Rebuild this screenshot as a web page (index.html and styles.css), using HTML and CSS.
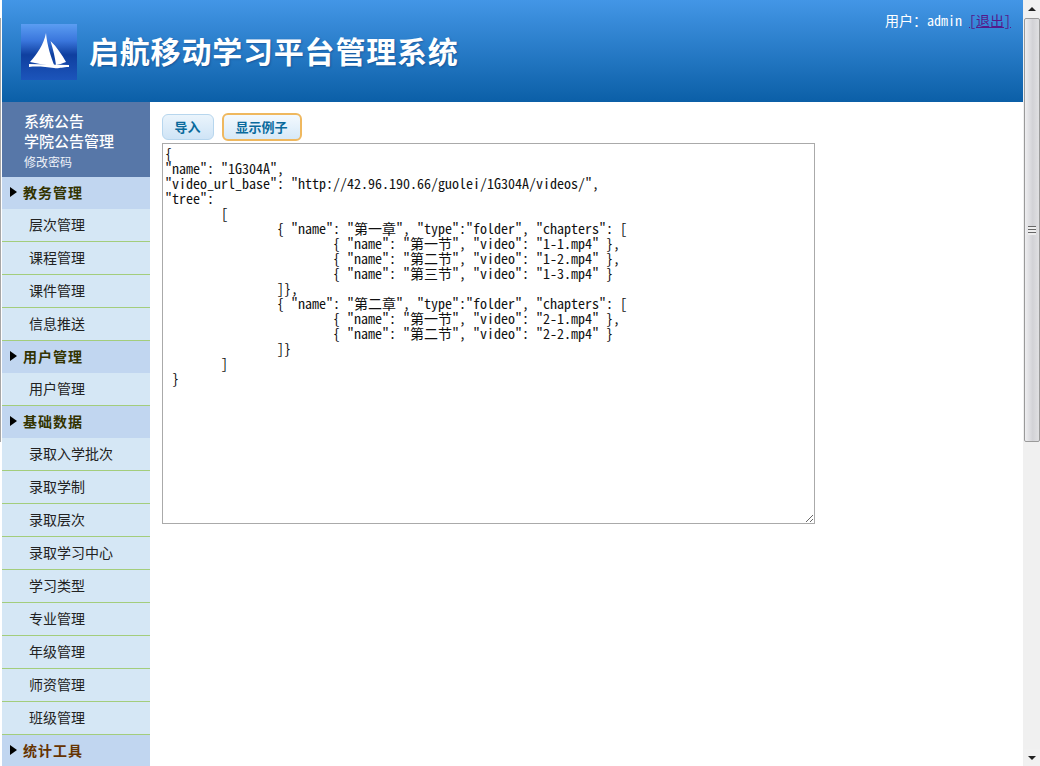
FILE: index.html
```html
<!DOCTYPE html>
<html lang="zh-CN">
<head>
<meta charset="utf-8">
<title>启航移动学习平台管理系统</title>
<link rel="stylesheet" href="styles.css">
</head>
<body>
<div class="page">
  <div class="gutter"></div>
  <div class="main">
    <header class="header">
      <div class="brand">
        <svg class="logo" viewBox="0 0 56 56" width="56" height="56" aria-hidden="true">
          <defs>
            <linearGradient id="logoBg" x1="0" y1="0" x2="0" y2="1">
              <stop offset="0" stop-color="#5b9df2"/>
              <stop offset="0.3" stop-color="#3a76dc"/>
              <stop offset="0.55" stop-color="#0f3f9f"/>
              <stop offset="1" stop-color="#1c55bb"/>
            </linearGradient>
          </defs>
          <rect width="56" height="56" fill="url(#logoBg)"/>
          <path d="M25 9 C26 21 30 33 33.5 42 C26 41 17 40 9 38 C16 30 23 20 25 9Z" fill="#fff"/>
          <path d="M29.5 17 C36 23 41 31 45 38 C41 39.5 38 40.5 35 41 C34 33 32 25 29.5 17Z" fill="#fff"/>
          <path d="M8 40 L48 41 L48 43 C40 43 38 45 33 44 C25 43 16 42 8 43Z" fill="#fff"/>
        </svg>
        <h1 class="title">启航移动学习平台管理系统</h1>
      </div>
      <div class="user">用户：admin <a class="logout" href="#">[退出]</a></div>
    </header>
    <div class="body">
      <nav class="sidebar">
        <div class="quick">
          <a class="quick-main">系统公告</a>
          <a class="quick-main">学院公告管理</a>
          <a class="quick-sub">修改密码</a>
        </div>
        <div class="group">教务管理</div>
        <a class="item">层次管理</a>
        <a class="item">课程管理</a>
        <a class="item">课件管理</a>
        <a class="item">信息推送</a>
        <div class="group">用户管理</div>
        <a class="item">用户管理</a>
        <div class="group">基础数据</div>
        <a class="item">录取入学批次</a>
        <a class="item">录取学制</a>
        <a class="item">录取层次</a>
        <a class="item">录取学习中心</a>
        <a class="item">学习类型</a>
        <a class="item">专业管理</a>
        <a class="item">年级管理</a>
        <a class="item">师资管理</a>
        <a class="item">班级管理</a>
        <div class="group group-tools">统计工具</div>
      </nav>
      <main class="content">
        <div class="toolbar">
          <button class="btn" type="button">导入</button>
          <button class="btn btn-focus" type="button">显示例子</button>
        </div>
        <textarea class="json" spellcheck="false">{
"name": "1G304A",
"video_url_base": "http://42.96.190.66/guolei/1G304A/videos/",
"tree":
	[
		{ "name": "第一章", "type":"folder", "chapters": [
			{ "name": "第一节", "video": "1-1.mp4" },
			{ "name": "第二节", "video": "1-2.mp4" },
			{ "name": "第三节", "video": "1-3.mp4" }
		]},
		{ "name": "第二章", "type":"folder", "chapters": [
			{ "name": "第一节", "video": "2-1.mp4" },
			{ "name": "第二节", "video": "2-2.mp4" }
		]}
	]
 }</textarea>
      </main>
    </div>
  </div>
  <div class="scrollbar" aria-hidden="true">
    <div class="sb-btn"><span class="arrow-up"></span></div>
    <div class="sb-thumb"><span class="sb-grip"></span></div>
    <div class="sb-track"></div>
    <div class="sb-btn"><span class="arrow-down"></span></div>
  </div>
</div>
</body>
</html>
```
FILE: styles.css
```css
* { box-sizing: border-box; }
html, body { margin: 0; height: 100%; overflow: hidden; background: #fff; }
body { font-family: "Noto Sans CJK SC", "Liberation Sans", sans-serif; }

.page { display: flex; height: 766px; width: 1040px; overflow: hidden; }
.gutter { flex: 0 0 2px; padding-top: 18px; background: #fff; }
.gutter::before { content: ""; display: block; width: 1px; height: 424px; background: #a6a6a6; }
.main { flex: 0 0 1021px; min-width: 0; display: flex; flex-direction: column; }

.header {
  flex: 0 0 102px;
  display: flex;
  justify-content: space-between;
  align-items: flex-start;
  padding: 11px 12px 0 19px;
  background: linear-gradient(#4396e6, #0b5fa7);
}
.brand { display: flex; align-items: flex-start; gap: 12px; margin-top: 13px; }
.logo { display: block; flex: none; }
.title {
  margin: 0;
  font-size: 30px;
  line-height: 52px;
  font-weight: 700;
  color: #fff;
  letter-spacing: 0.8px;
  text-shadow: 1px 1px 2px rgba(10, 50, 110, .45);
}
.user { font-size: 14px; line-height: 18px; color: #fff; font-family: "Noto Sans Mono CJK SC", "Liberation Mono", "Noto Sans CJK SC", monospace; }
.logout { color: #551a8b; text-decoration: underline; }

.body { flex: 1; min-height: 0; display: flex; overflow: hidden; }
.sidebar { flex: 0 0 148px; display: flex; flex-direction: column; }
.quick {
  flex: 0 0 75px;
  display: flex;
  flex-direction: column;
  padding: 9px 0 0 22px;
  background: #5777a8;
  color: #fff;
}
.quick-main { font-size: 15px; line-height: 20px; font-weight: 500; }
.quick-sub { font-size: 12px; line-height: 21px; color: #eef2f8; }

.group {
  flex: 0 0 32px;
  display: flex;
  align-items: center;
  gap: 6px;
  padding: 0 0 2px 8px;
  background: #c1d6f0;
  color: #333300;
  font-size: 14px;
  font-weight: 700;
  letter-spacing: 1px;
}
.group::before {
  content: "";
  border-left: 7px solid #000;
  border-top: 5px solid transparent;
  border-bottom: 5px solid transparent;
}
.group-tools { color: #663300; }

.item {
  flex: 0 0 33px;
  display: block;
  padding-left: 27px;
  background: #d5e7f5;
  border-bottom: 1px solid #a3cd7c;
  color: #222;
  font-size: 14px;
  line-height: 30px;
}

.content { flex: 1; min-width: 0; padding: 11px 0 0 12px; }
.toolbar { display: flex; align-items: center; gap: 8px; height: 28px; }
.btn {
  width: 52px;
  height: 26px;
  padding: 0 1px 2px 0;
  border: 1px solid #b7d6ee;
  border-radius: 6px;
  background: linear-gradient(#eaf4fc, #cfe4f6);
  color: #0a6a9c;
  font: 700 13px/1 "Noto Sans CJK SC", sans-serif;
}
.btn-focus {
  width: 80px;
  height: 28px;
  border: 2px solid #efb85f;
  background: linear-gradient(#f3f9fe, #d6e9f8);
}
.json {
  display: block;
  width: 653px;
  height: 381px;
  margin-top: 2px;
  padding: 2px;
  border: 1px solid #aaa;
  border-radius: 0;
  outline: none;
  resize: both;
  background: #fff;
  color: #111;
  font-family: "Noto Sans Mono CJK SC", "Liberation Mono", "Noto Sans CJK SC", monospace;
  font-size: 14px;
  line-height: 15px;
  tab-size: 8;
  white-space: pre;
  overflow: hidden;
}

.scrollbar { flex: 0 0 17px; padding-left: 1px; display: flex; flex-direction: column; background: #f0f0f0; }
.sb-btn { flex: 0 0 17px; display: flex; align-items: center; justify-content: center; background: #f1f1f1; }
.arrow-up { border: 4px solid transparent; border-top: 0; border-bottom: 4px solid #222; }
.arrow-down { border: 4px solid transparent; border-bottom: 0; border-top: 4px solid #222; }
.sb-thumb {
  flex: 0 0 424px;
  margin-top: 1px;
  display: flex;
  align-items: center;
  justify-content: center;
  border: 1px solid #9a9a9a;
  border-radius: 2px;
  background: linear-gradient(90deg, #eeeef0, #d2d2d6 55%, #e0e0e2);
}
.sb-grip {
  width: 8px;
  height: 9px;
  background: repeating-linear-gradient(#666 0 1px, #eee 1px 3px);
}
.sb-track { flex: 1; background: #f0f0f0; }
```
